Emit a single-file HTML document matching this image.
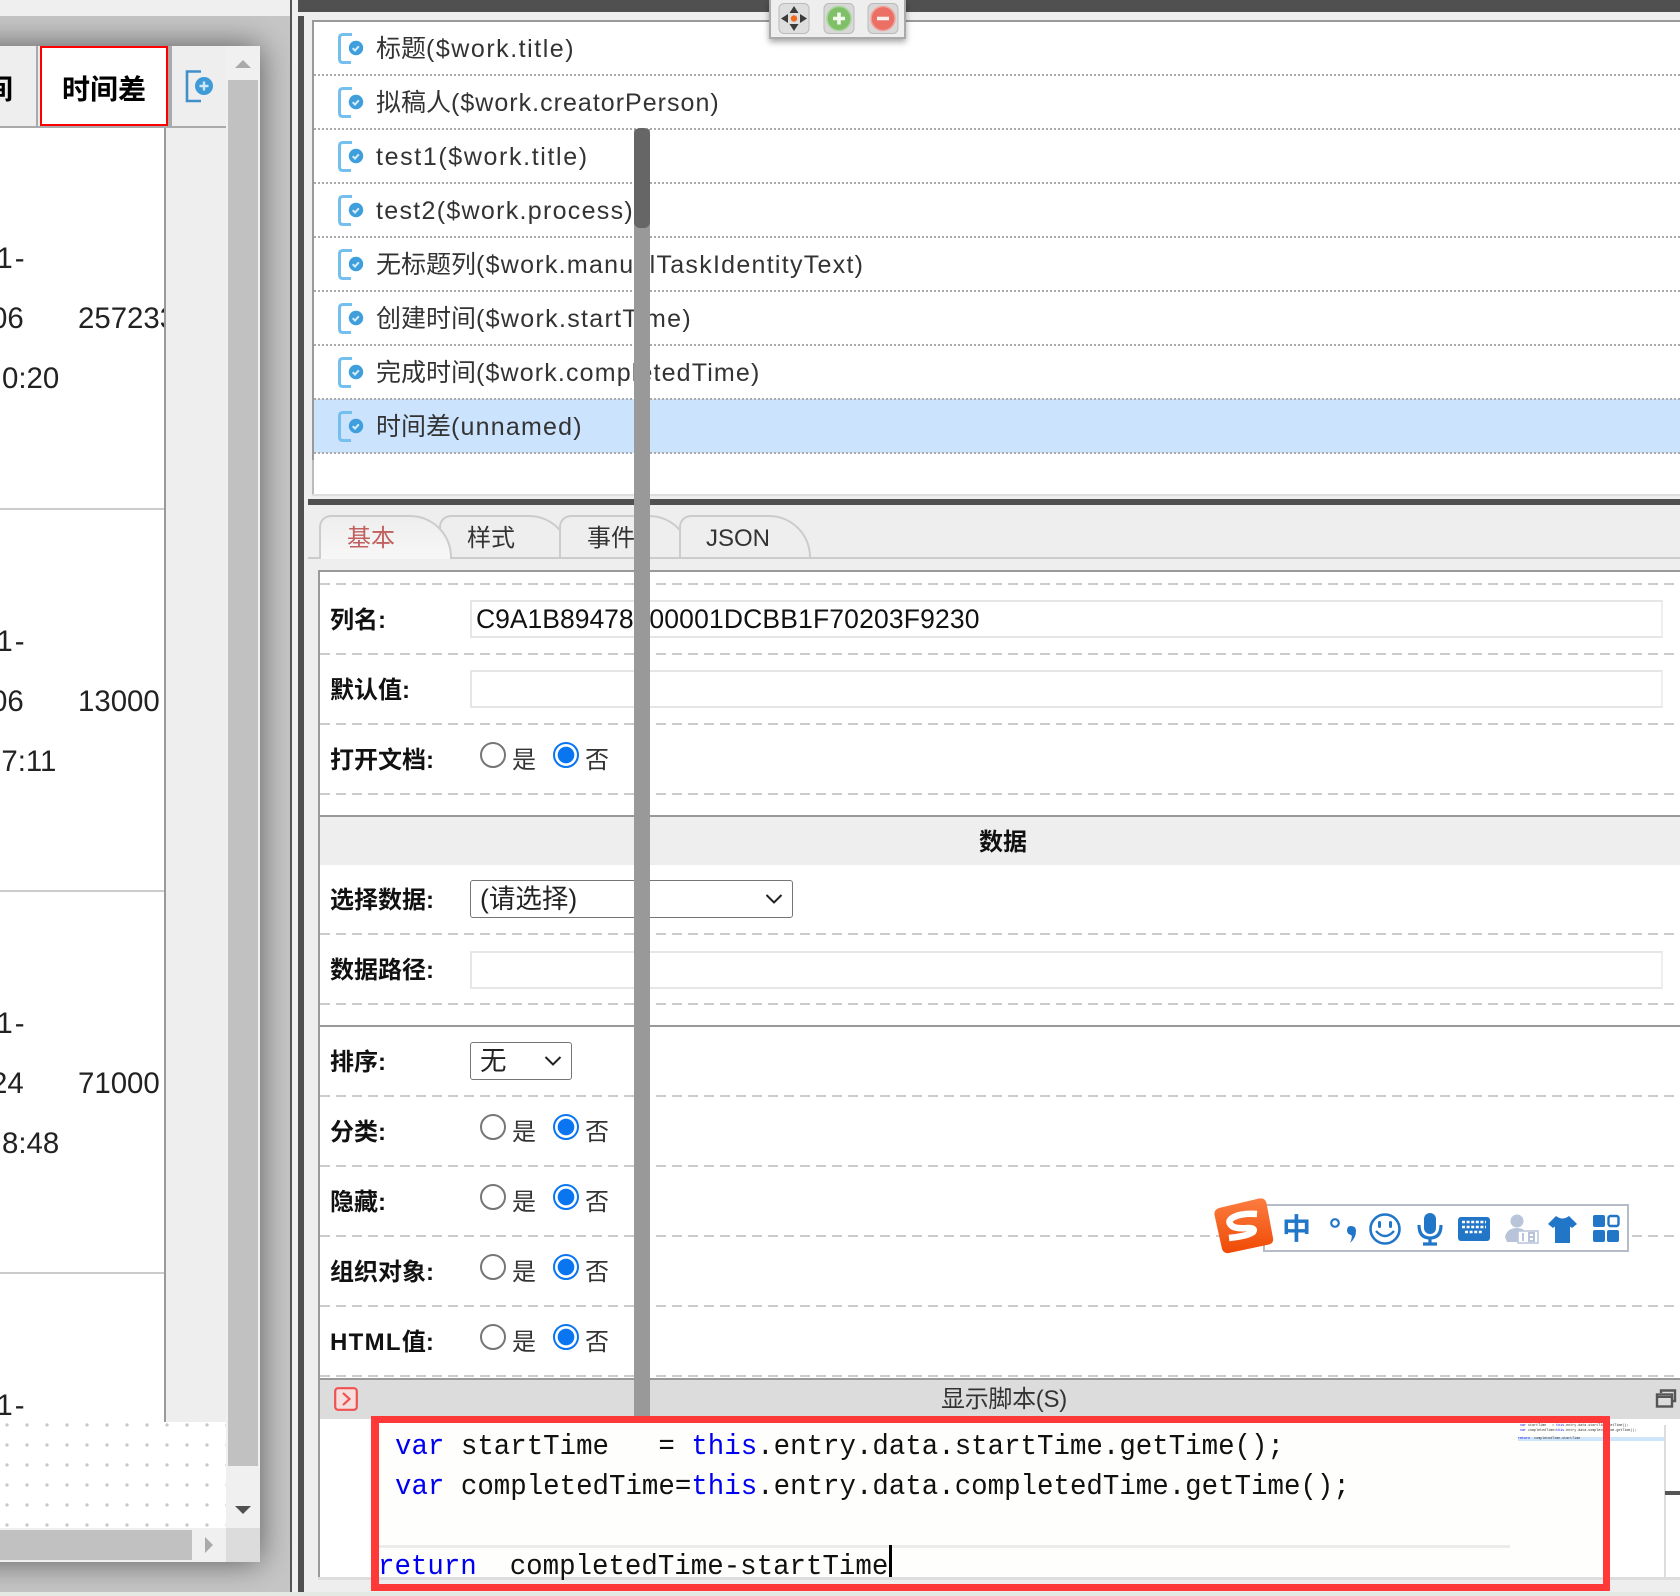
<!DOCTYPE html>
<html lang="zh">
<head>
<meta charset="utf-8">
<title>Form designer</title>
<style>
html,body{margin:0;padding:0;width:1680px;height:1596px;overflow:hidden;background:#eee}
body{position:relative;font-family:"Liberation Sans","Noto Sans CJK SC",sans-serif;color:#333}
.a{position:absolute;white-space:pre}
.cjk{letter-spacing:0;font-family:"Noto Sans CJK SC",sans-serif}
.row{left:376px;height:54px;line-height:52px;font-size:25px;letter-spacing:1.45px;color:#333;z-index:2}
.dot{left:314px;right:0;height:0;border-top:2px dotted #aaa;z-index:2}
.ic{left:338px;width:26px;height:31px;z-index:2}
.dash{left:320px;right:0;height:2px;background:repeating-linear-gradient(90deg,#ccc 0 10px,transparent 10px 16px)}
.lab{left:330px;height:34px;line-height:34px;font-size:24px;font-weight:700;color:#111;letter-spacing:0}
.inp{left:470px;width:1189px;height:34px;border:2px solid #e6e6e6;background:#fff;border-right-color:#eee}
.sel{left:470px;border:1.5px solid #767676;border-radius:3px;background:#fff;box-sizing:border-box}
.rad{width:26px;height:26px;border-radius:50%;box-sizing:border-box;background:#fff}
.off{border:2.5px solid #767676}
.on{border:2.5px solid #0a75f0;background:radial-gradient(circle,#0a75f0 0 8px,#fff 8.6px)}
.rt{font-size:24px;height:34px;line-height:34px;color:#333}
.tab{box-sizing:border-box;height:42px;top:515px;border:2px solid #ccc;border-bottom:none;border-radius:12px 42px 0 0;font-size:24px;line-height:44px;color:#333;background:#eee}
.cell{font-size:29.4px;height:40px;line-height:40px;color:#222}
.one{letter-spacing:2px}
.code{font-family:"Liberation Mono",monospace;font-size:29px;height:40px;line-height:40px;color:#111;transform-origin:0 50%;transform:scaleX(.9459);z-index:4}
.code i{font-style:normal;color:#0000f0}
.mini{font-family:"Liberation Mono",monospace;font-size:3.35px;line-height:4px;height:4px;color:#333;left:1520px;z-index:3}
.mini i{font-style:normal;color:#0000f0}
</style>
</head>
<body>

<svg width="0" height="0" style="position:absolute">
<symbol id="fi" viewBox="0 0 26 31">
<path d="M14 1.500H5Q1.500 1.500 1.500 5V26Q1.500 29.500 5 29.500H13" fill="none" stroke="#74bfee" stroke-width="3"/>
<circle cx="18" cy="15" r="7.200" fill="#3f9fdd"/>
<path d="M14.700 15.200l2.300 2.300 3.800-4.200" fill="none" stroke="#d7ecfa" stroke-width="2"/>
</symbol>
</svg>

<!-- left backdrop + window -->
<div class="a" style="left:0;top:0;width:290px;height:16px;background:#efefef"></div>
<div class="a" style="left:0;top:16px;width:290px;height:1576px;background:#c6c6c6;overflow:hidden">
  <div class="a" style="left:-40px;top:30px;width:300px;height:1516px;box-shadow:0 0 30px rgba(0,0,0,.55)"></div>
</div>

<div class="a" style="left:0;top:46px;width:260px;height:1516px;background:#f0f0f0;overflow:hidden">
  <!-- header -->
  <div class="a" style="left:0;top:0;width:226px;height:80px;background:#eee"></div>
  <div class="a" style="left:0;top:80px;width:226px;height:2px;background:#aaa"></div>
  <div class="a" style="left:36px;top:0;width:2px;height:80px;background:#aaa"></div>
  <div class="a" style="left:-15px;top:25px;font-size:28px;font-weight:700;line-height:38px;color:#000">间</div>
  <div class="a" style="left:40px;top:0;width:128px;height:80px;box-sizing:border-box;border:2.5px solid #f00;background:#fff"></div>
  <div class="a" style="left:62px;top:25px;font-size:28px;font-weight:700;line-height:38px;color:#000">时间差</div>
  <div class="a" style="left:168px;top:0;width:4px;height:80px;background:#aaa"></div>
  <svg class="a" style="left:185px;top:24px" width="29" height="33" viewBox="0 0 29 33">
    <path d="M16 1.500H2V31H16" fill="none" stroke="#3f8fcb" stroke-width="2.600"/>
    <circle cx="19" cy="16" r="9" fill="#3f9ad8"/>
    <path d="M14.500 16H23.500M19 11.500V20.500" stroke="#cfe8f8" stroke-width="2.400"/>
  </svg>

  <!-- body -->
  <div class="a" style="left:0;top:82px;width:164px;height:1294px;background:#fff;overflow:hidden">
    <div class="a" style="left:0;top:380px;width:164px;height:2px;background:#ccc"></div>
    <div class="a" style="left:0;top:762px;width:164px;height:2px;background:#ccc"></div>
    <div class="a" style="left:0;top:1144px;width:164px;height:2px;background:#ccc"></div>

    <div class="a cell one" style="left:-22px;top:111px">01-</div>
    <div class="a cell" style="left:-9px;top:171px">06</div>
    <div class="a cell" style="left:2px;top:231px">0:20</div>
    <div class="a cell" style="left:78px;top:171px">257233</div>

    <div class="a cell one" style="left:-22px;top:494px">01-</div>
    <div class="a cell" style="left:-9px;top:554px">06</div>
    <div class="a cell" style="left:-15px;top:614px">17:11</div>
    <div class="a cell" style="left:78px;top:554px">13000</div>

    <div class="a cell one" style="left:-22px;top:876px">01-</div>
    <div class="a cell" style="left:-9px;top:936px">24</div>
    <div class="a cell" style="left:2px;top:996px">8:48</div>
    <div class="a cell" style="left:78px;top:936px">71000</div>

    <div class="a cell one" style="left:-22px;top:1258px">01-</div>
  </div>
  <div class="a" style="left:164px;top:82px;width:2px;height:1294px;background:#999"></div>
  <div class="a" style="left:166px;top:82px;width:60px;height:1294px;background:#eee"></div>
  <div class="a" style="left:0;top:1376px;width:226px;height:106px;background-color:#fff;background-image:radial-gradient(circle,#c8c8c8 0 1.5px,transparent 1.9px);background-size:20px 20px;background-position:-3px -7px"></div>

  <!-- scrollbars -->
  <div class="a" style="left:226px;top:0;width:34px;height:1482px;background:#f0f0f0"></div>
  <div class="a" style="left:228px;top:34px;width:30px;height:1386px;background:#c1c1c1"></div>
  <div class="a" style="left:235px;top:14px;width:0;height:0;border-left:8px solid transparent;border-right:8px solid transparent;border-bottom:8px solid #aaa"></div>
  <div class="a" style="left:235px;top:1460px;width:0;height:0;border-left:8px solid transparent;border-right:8px solid transparent;border-top:8px solid #505050"></div>
  <div class="a" style="left:0;top:1482px;width:226px;height:34px;background:#f0f0f0"></div>
  <div class="a" style="left:0;top:1484px;width:192px;height:30px;background:#c1c1c1"></div>
  <div class="a" style="left:205px;top:1491px;width:0;height:0;border-top:8px solid transparent;border-bottom:8px solid transparent;border-left:8px solid #aaa"></div>
  <div class="a" style="left:226px;top:1482px;width:34px;height:34px;background:#dcdcdc"></div>
</div>

<!-- dividers -->
<div class="a" style="left:290px;top:0;width:2px;height:1592px;background:#555"></div>
<div class="a" style="left:292px;top:0;width:6px;height:1592px;background:#f0f0f0"></div>
<div class="a" style="left:298px;top:16px;width:6px;height:1576px;background:#505050"></div>
<div class="a" style="left:298px;top:0;width:1382px;height:12px;background:#505050"></div>
<div class="a" style="left:0;top:1592px;width:1680px;height:4px;background:#e4e9e4;z-index:6"></div>

<!-- list -->
<div class="a" style="left:312px;top:20px;width:1368px;height:474px;box-sizing:border-box;background:#fff;border-top:2px solid #999;border-left:2px solid #999"></div>
<div class="a" style="left:312px;top:494px;width:1368px;height:2px;background:#ddd"></div>
<div class="a" style="left:312px;top:460px;width:2px;height:34px;background:#bbb"></div>
<div class="a" style="left:314px;top:399px;right:0;height:54px;background:#cbe3fd"></div>
<div class="a dot" style="top:74px"></div>
<div class="a dot" style="top:128px"></div>
<div class="a dot" style="top:182px"></div>
<div class="a dot" style="top:236px"></div>
<div class="a dot" style="top:290px"></div>
<div class="a dot" style="top:344px"></div>
<div class="a dot" style="top:398px"></div>
<div class="a dot" style="top:452px"></div>

<svg class="a ic" style="top:33px"><use href="#fi"/></svg>
<svg class="a ic" style="top:87px"><use href="#fi"/></svg>
<svg class="a ic" style="top:141px"><use href="#fi"/></svg>
<svg class="a ic" style="top:195px"><use href="#fi"/></svg>
<svg class="a ic" style="top:249px"><use href="#fi"/></svg>
<svg class="a ic" style="top:303px"><use href="#fi"/></svg>
<svg class="a ic" style="top:357px"><use href="#fi"/></svg>
<svg class="a ic" style="top:411px"><use href="#fi"/></svg>

<div class="a row" style="top:21px;letter-spacing:1.53px"><span class="cjk">标题</span>($work.title)</div>
<div class="a row" style="top:75px;letter-spacing:1.02px"><span class="cjk">拟稿人</span>($work.creatorPerson)</div>
<div class="a row" style="top:131px;letter-spacing:1.63px">test1($work.title)</div>
<div class="a row" style="top:185px;letter-spacing:1.3px">test2($work.process)</div>
<div class="a row" style="top:237px;letter-spacing:1.27px"><span class="cjk">无标题列</span>($work.manualTaskIdentityText)</div>
<div class="a row" style="top:291px;letter-spacing:1.32px"><span class="cjk">创建时间</span>($work.startTime)</div>
<div class="a row" style="top:345px;letter-spacing:1.15px"><span class="cjk">完成时间</span>($work.completedTime)</div>
<div class="a row" style="top:399px;letter-spacing:1.2px"><span class="cjk">时间差</span>(unnamed)</div>

<!-- floating toolbar -->
<div class="a" style="left:769px;top:0;width:137px;height:39px;box-sizing:border-box;background:#eee;border:2px solid #aaa;border-top:none;box-shadow:0 3px 6px rgba(0,0,0,.35);z-index:5">
  <svg class="a" style="left:7px;top:3px" width="122" height="31" viewBox="0 0 122 31">
    <rect x="1" y="0.500" width="30" height="30" rx="5" fill="#dedede" stroke="#bbb"/>
    <path d="M16 3l4.500 7h-9zM16 28l-4.500-7h9zM3 15.500l7-4.500v9zM29 15.500l-7 4.500v-9z" fill="#3c3c3c"/>
    <circle cx="16" cy="15.500" r="3.200" fill="#f26a1b"/>
    <rect x="46" y="0.500" width="30" height="30" rx="5" fill="#d8d8d8" stroke="#bbb"/>
    <circle cx="61" cy="15.500" r="12" fill="#7fbf68" stroke="#a8d59a" stroke-width="1.500"/>
    <path d="M61 9.500v12M55 15.500h12" stroke="#f2f8ee" stroke-width="3.600"/>
    <rect x="90" y="0.500" width="30" height="30" rx="5" fill="#d8d8d8" stroke="#bbb"/>
    <circle cx="105" cy="15.500" r="12" fill="#ec6f66" stroke="#f0a39d" stroke-width="1.500"/>
    <path d="M99 15.500h12" stroke="#fbeeee" stroke-width="3.600"/>
  </svg>
</div>

<!-- dark divider -->
<div class="a" style="left:308px;top:499px;width:1372px;height:6px;background:#505050"></div>

<!-- tabs -->
<div class="a" style="left:308px;top:557px;width:1372px;height:2px;background:#ccc"></div>
<div class="a tab" style="left:439px;width:132px;padding-left:26px;z-index:1">样式</div>
<div class="a tab" style="left:559px;width:132px;padding-left:26px;z-index:2">事件</div>
<div class="a tab" style="left:679px;width:132px;padding-left:25px;z-index:3">JSON</div>
<div class="a tab" style="left:319px;width:133px;height:44px;padding-left:26px;z-index:4;color:#c1605f;background:linear-gradient(#eee,#f7f7f7)">基本</div>

<!-- form -->
<div class="a" style="left:318px;top:570px;width:1362px;height:1007px;box-sizing:border-box;background:#fff;border-top:2px solid #999;border-left:2px solid #999"></div>
<div class="a dash" style="top:583px"></div>
<div class="a dash" style="top:653px"></div>
<div class="a dash" style="top:723px"></div>
<div class="a dash" style="top:793px"></div>

<div class="a lab" style="top:604px">列名:</div>
<div class="a lab" style="top:674px">默认值:</div>
<div class="a lab" style="top:744px">打开文档:</div>

<div class="a inp" style="top:600px"></div>
<div class="a" style="left:476px;top:600px;height:38px;line-height:38px;font-size:26.500px;color:#111">C9A1B89478<span style="letter-spacing:1px">0</span><span style="letter-spacing:.15px">00001DCBB1F70203F9230</span></div>
<div class="a inp" style="top:670px"></div>

<div class="a rad off" style="left:480px;top:742px"></div>
<div class="a rt" style="left:512px;top:744px">是</div>
<div class="a rad on" style="left:553px;top:742px"></div>
<div class="a rt" style="left:585px;top:744px">否</div>

<div class="a" style="left:320px;top:815px;right:0;height:2px;background:#999"></div>
<div class="a" style="left:320px;top:817px;right:0;height:48px;background:#eee"></div>
<div class="a lab" style="left:979px;top:826px">数据</div>

<div class="a lab" style="top:884px">选择数据:</div>
<div class="a sel" style="top:880px;width:323px;height:38px;"></div>
<div class="a" style="left:480px;top:881px;height:38px;line-height:36px;font-size:26.500px;color:#222">(请选择)</div>
<svg class="a" style="left:765px;top:893px" width="18" height="12" viewBox="0 0 18 12"><path d="M1.500 2l7.500 7.500 7.500-7.500" fill="none" stroke="#222" stroke-width="2"/></svg>
<div class="a dash" style="top:933px"></div>

<div class="a lab" style="top:954px">数据路径:</div>
<div class="a inp" style="top:951px"></div>
<div class="a dash" style="top:1003px"></div>
<div class="a" style="left:320px;top:1025px;right:0;height:2px;background:#999"></div>

<div class="a lab" style="top:1046px">排序:</div>
<div class="a sel" style="top:1042px;width:102px;height:38px"></div>
<div class="a" style="left:480px;top:1043px;height:38px;line-height:36px;font-size:26.500px;color:#222">无</div>
<svg class="a" style="left:544px;top:1055px" width="18" height="12" viewBox="0 0 18 12"><path d="M1.500 2l7.500 7.500 7.500-7.500" fill="none" stroke="#222" stroke-width="2"/></svg>
<div class="a dash" style="top:1095px"></div>

<div class="a lab" style="top:1116px">分类:</div>
<div class="a rad off" style="left:480px;top:1114px"></div>
<div class="a rt" style="left:512px;top:1116px">是</div>
<div class="a rad on" style="left:553px;top:1114px"></div>
<div class="a rt" style="left:585px;top:1116px">否</div>
<div class="a dash" style="top:1165px"></div>

<div class="a lab" style="top:1186px">隐藏:</div>
<div class="a rad off" style="left:480px;top:1184px"></div>
<div class="a rt" style="left:512px;top:1186px">是</div>
<div class="a rad on" style="left:553px;top:1184px"></div>
<div class="a rt" style="left:585px;top:1186px">否</div>
<div class="a dash" style="top:1235px"></div>

<div class="a lab" style="top:1256px">组织对象:</div>
<div class="a rad off" style="left:480px;top:1254px"></div>
<div class="a rt" style="left:512px;top:1256px">是</div>
<div class="a rad on" style="left:553px;top:1254px"></div>
<div class="a rt" style="left:585px;top:1256px">否</div>
<div class="a dash" style="top:1305px"></div>

<div class="a lab" style="top:1326px"><span style="letter-spacing:1.3px">HTML</span>值:</div>
<div class="a rad off" style="left:480px;top:1324px"></div>
<div class="a rt" style="left:512px;top:1326px">是</div>
<div class="a rad on" style="left:553px;top:1324px"></div>
<div class="a rt" style="left:585px;top:1326px">否</div>
<div class="a dash" style="top:1375px"></div>

<!-- script header -->
<div class="a" style="left:320px;top:1378px;right:0;height:2px;background:#999"></div>
<div class="a" style="left:320px;top:1380px;right:0;height:39px;background:#dcdcdc"></div>
<svg class="a" style="left:334px;top:1387px" width="24" height="24" viewBox="0 0 24 24"><rect x="1.200" y="1.200" width="21.600" height="21.600" rx="3" fill="#f5dede" stroke="#ef5050" stroke-width="2.200"/><path d="M9 6l6.500 6-6.500 6" fill="none" stroke="#ef5050" stroke-width="2.200"/></svg>
<div class="a" style="left:941px;top:1383px;height:34px;line-height:34px;font-size:24px;color:#333;letter-spacing:-.3px">显示脚本(S)</div>
<svg class="a" style="left:1655px;top:1388px" width="22" height="22" viewBox="0 0 22 22"><path d="M6 5V2.500H20V13H17" fill="none" stroke="#555" stroke-width="2.400"/><rect x="2" y="6.500" width="15" height="12" fill="none" stroke="#555" stroke-width="2.400"/><path d="M2 9h15" stroke="#555" stroke-width="2"/></svg>

<!-- code editor -->
<div class="a" style="left:320px;top:1419px;right:0;height:158px;background:#fff"></div>
<div class="a" style="left:379px;top:1423px;width:1224px;height:154px;background:#fefefc"></div>
<div class="a" style="left:379px;top:1545px;width:1131px;height:3px;background:#ececec"></div>
<div class="a code" style="left:395px;top:1427px"><i>var</i> startTime   = <i>this</i>.entry.data.startTime.getTime();</div>
<div class="a code" style="left:395px;top:1467px"><i>var</i> completedTime=<i>this</i>.entry.data.completedTime.getTime();</div>
<div class="a code" style="left:378px;top:1547px"><i>return</i>  completedTime-startTime</div>
<div class="a" style="left:889px;top:1545px;width:3px;height:32px;background:#000;z-index:5"></div>

<!-- minimap -->
<div class="a" style="left:1518px;top:1437px;width:146px;height:4px;background:#cfe5fc"></div>
<div class="a mini" style="top:1424px"><i>var</i> startTime   = <i>this</i>.entry.data.startTime.getTime();</div>
<div class="a mini" style="top:1429px"><i>var</i> completedTime=<i>this</i>.entry.data.completedTime.getTime();</div>
<div class="a mini" style="left:1518px;top:1437px"><i>return</i>  completedTime-startTime</div>
<div class="a" style="left:1664px;top:1425px;width:2px;height:152px;background:#ddd"></div>
<div class="a" style="left:1665px;top:1491px;width:15px;height:4px;background:#555"></div>

<!-- bottom bar -->
<div class="a" style="left:318px;top:1577px;right:0;height:3px;background:#ddd"></div>
<div class="a" style="left:304px;top:1580px;right:0;height:12px;background:#eee"></div>

<!-- overlay vertical scrollbar -->
<div class="a" style="left:634px;top:129px;width:16px;height:1287px;background:#999;z-index:7"></div>
<div class="a" style="left:634px;top:128px;width:16px;height:100px;background:#666;border-radius:6px;z-index:8"></div>

<!-- red highlight -->
<div class="a" style="left:371px;top:1416px;width:1239px;height:175px;box-sizing:border-box;border:solid #ff3838;border-width:7px 7px 7px 8px;z-index:9"></div>

<!-- IME bar -->
<div class="a" style="left:1263px;top:1204px;width:366px;height:48px;box-sizing:border-box;background:#fff;border:2px solid #b5bcc8;z-index:6"></div>
<svg class="a" style="left:1212px;top:1196px;z-index:7" width="64" height="60" viewBox="0 0 64 60">
  <defs><linearGradient id="og" x1="0" y1="0" x2="0" y2="1"><stop offset="0" stop-color="#fb7c40"/><stop offset="1" stop-color="#f04a05"/></linearGradient></defs>
  <path d="M7 12L47 2.500Q53 1.500 54.500 7L61 42Q62 47 57 48.500L17 57Q12 58 10 53L2.500 19Q1.500 14 7 12Z" fill="url(#og)"/>
  <path d="M45 18Q30 17 22 21Q14 25 20 30Q24 33 36 32Q44 32 41 36Q36 40 17 42" fill="none" stroke="#fff" stroke-width="6.500"/>
</svg>
<svg class="a" style="left:1276px;top:1206px;z-index:7" width="350" height="44" viewBox="0 0 350 44" fill="#2276c8">
  <text x="6" y="33" font-size="29" font-weight="700" font-family="Noto Sans CJK SC, sans-serif" fill="#2276c8">中</text>
  <circle cx="59" cy="17" r="3.800" fill="none" stroke="#2276c8" stroke-width="2.200"/>
  <path d="M75 20q5 0 5 5 0 7-6 12 3-7 1-8-4-1-4-4.500 0-4.500 4-4.500z"/>
  <circle cx="109" cy="23" r="14.500" fill="none" stroke="#2276c8" stroke-width="2.600"/>
  <rect x="102" y="15" width="3" height="7" rx="1.500"/><rect x="113" y="15" width="3" height="7" rx="1.500"/>
  <path d="M100 25q9 10 18 0" fill="none" stroke="#2276c8" stroke-width="2.400"/>
  <rect x="148" y="7" width="12" height="21" rx="6"/>
  <path d="M143 19q0 13 11 13t11-13M154 32v5M147 38h14" fill="none" stroke="#2276c8" stroke-width="3.200"/>
  <rect x="182" y="11" width="32" height="24" rx="3"/>
  <path d="M186 16h24M186 21h24M189 26h18" stroke="#fff" stroke-width="2.600" stroke-dasharray="3 1.600"/>
  <circle cx="241" cy="15" r="6.500" fill="#b7c4da"/>
  <path d="M229 31q2-9 12-9 5 0 8 3v11h-18z" fill="#b7c4da"/>
  <rect x="242" y="25" width="20" height="12" fill="#fff" stroke="#b7c4da" stroke-width="1.500"/>
  <path d="M247 27v8M253 27h5v8h-5zM253 31h5" fill="none" stroke="#b7c4da" stroke-width="2"/>
  <path d="M280 10l-8 8 5 4 2-1.500V37h15V20.500l2 1.500 5-4-8-8q-6.500 5-13 0z"/>
  <rect x="317" y="9" width="12" height="12" rx="2"/>
  <rect x="332.500" y="10" width="10" height="10" rx="2" fill="#fff" stroke="#2276c8" stroke-width="2.400"/>
  <rect x="317" y="24" width="12" height="12" rx="2"/><rect x="331" y="24" width="12" height="12" rx="2"/>
</svg>

</body>
</html>
